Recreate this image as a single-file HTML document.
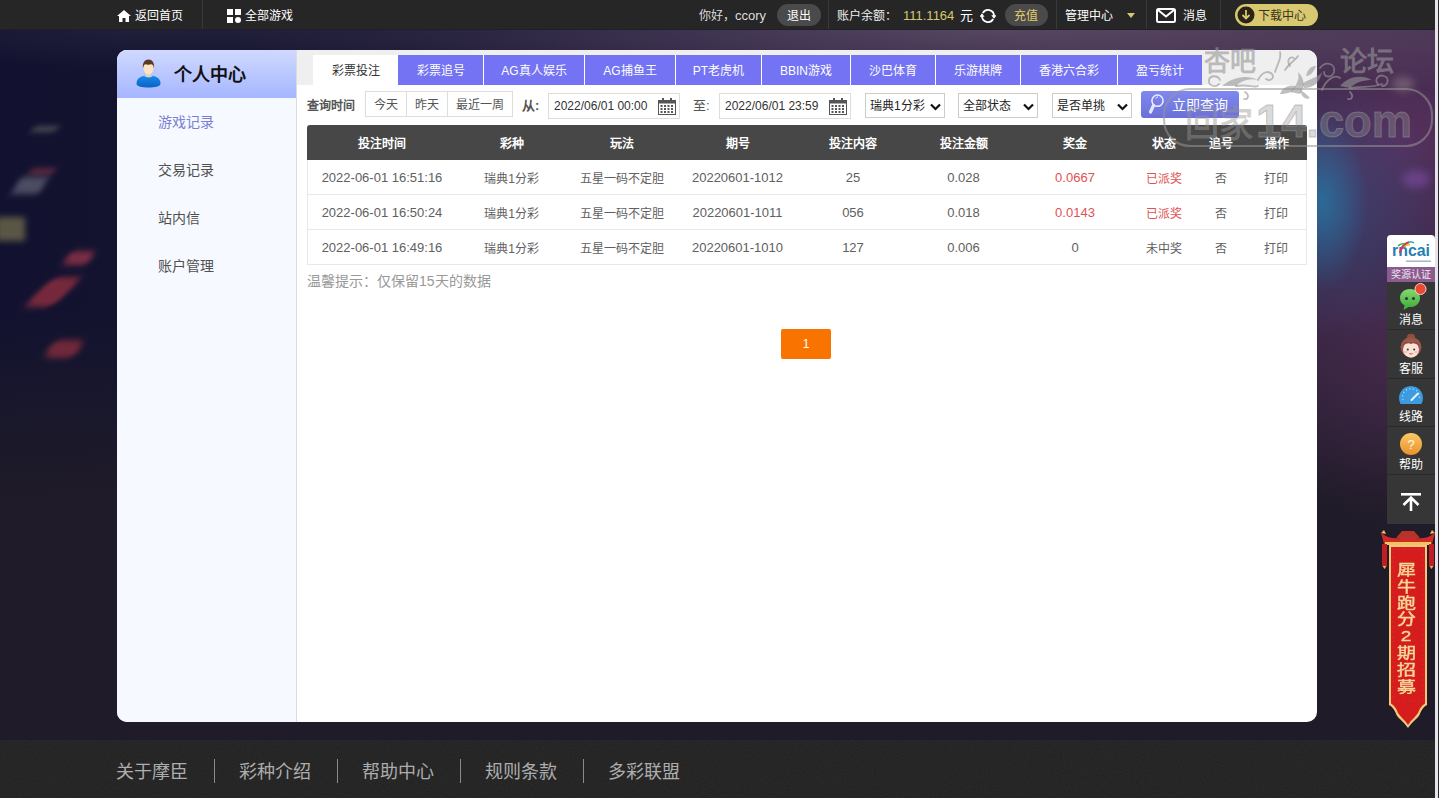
<!DOCTYPE html>
<html lang="zh-CN"><head><meta charset="utf-8">
<style>
*{margin:0;padding:0;box-sizing:border-box}
html,body{width:1439px;height:798px;overflow:hidden}
body{position:relative;font-family:"Liberation Sans",sans-serif;font-size:12px;color:#333;background:#16152e}
.abs{position:absolute}
#bg{left:0;top:29px;width:1439px;height:711px;overflow:hidden;
background:
radial-gradient(ellipse 45px 90px at 1322px 172px, rgba(35,135,180,.6), rgba(35,135,180,0) 100%),
radial-gradient(ellipse 110px 130px at 1335px 180px, rgba(50,90,150,.45), rgba(50,90,150,0) 100%),
radial-gradient(ellipse 170px 120px at 1400px 110px, rgba(120,55,115,.45), rgba(120,55,115,0) 100%),
radial-gradient(ellipse 160px 180px at 1410px 330px, rgba(95,45,90,.4), rgba(95,45,90,0) 100%),
radial-gradient(ellipse 800px 70px at 1000px 0px, rgba(125,105,130,.5), rgba(125,105,130,0) 100%),
radial-gradient(ellipse 300px 40px at 150px 0px, rgba(60,55,80,.35), rgba(60,55,80,0) 100%),
linear-gradient(180deg, rgba(31,27,40,0) 0px, rgba(31,27,40,0) 280px, rgba(31,27,40,1) 470px, rgba(31,27,40,1) 711px),
linear-gradient(90deg,#121230 0px,#14142f 250px,#221c3a 700px,#362644 1150px,#3c2a4a 1439px);}
.bk{position:absolute;filter:blur(3px);transform:skewX(-30deg)}
#topbar{left:0;top:0;width:1439px;height:30px;background:linear-gradient(180deg,#262626 0,#262626 29px,#201f2a 29px);color:#fff}
#topbar span{position:absolute;top:1px;line-height:30px;white-space:nowrap}
.vsep{position:absolute;top:0;width:1px;height:29px;background:#3a3a3a}
#card{left:117px;top:50px;width:1200px;height:672px;background:#fff;border-radius:10px;overflow:hidden}
#side{left:0;top:0;width:180px;height:672px;background:#f6f9ff;border-right:1px solid #d8dede}
#sidehead{left:0;top:0;width:179px;height:48px;background:linear-gradient(180deg,#cfd9ff,#a6b6ff)}
#sidehead b{position:absolute;left:57px;top:13px;font-size:18px;font-weight:900;line-height:24px;color:#111}
.menu{position:absolute;left:41px;font-size:14px;color:#505050;line-height:20px}
#tabbar{left:180px;top:0;width:1020px;height:35px;background:#efefef}
.tab{position:absolute;top:5px;height:30px;line-height:33px;overflow:hidden;text-align:center;font-size:12px;color:#fff;background:#7373f3;border-left:1px solid #fff}
.tab.on{background:#fff;color:#333;border-left:0}
.qbtn{position:absolute;top:41px;height:26px;line-height:27px;overflow:hidden;border:1px solid #ddd;text-align:center;font-size:12px;color:#555;background:#fff}
.inp{position:absolute;top:43px;height:26px;border:1px solid #ddd;background:#fff;font-size:12px;color:#333;line-height:24px;padding-left:5px}
.sel{position:absolute;top:43px;height:25px;border:1px solid #ccc;background:#fff;font-size:12px;color:#222;line-height:25px;overflow:hidden;padding-left:4px}
.lbl{position:absolute;top:43px;line-height:26px;font-size:13px;color:#555}
table{position:absolute;left:190px;top:75px;width:1000px;border-collapse:separate;border-spacing:0;table-layout:fixed}
th{background:#474747;color:#fff;height:35px;font-weight:bold;font-size:12px;text-align:center}
td{height:35px;text-align:center;font-size:12px;color:#606060;border-bottom:1px solid #e8e8e8}
td.n{font-size:13px}
tr td:first-child{border-left:1px solid #e8e8e8}
tr td:last-child{border-right:1px solid #e8e8e8}
.red{color:#e05252}
tr th:first-child{border-top-left-radius:3px}
tr th:last-child{border-top-right-radius:3px}
#foot{left:0;top:740px;width:1439px;height:58px;background:#1f1f1f;overflow:hidden}
#foot span{position:absolute;top:1px;line-height:62px;font-size:18px;color:#adadad}
#foot i{position:absolute;top:19px;width:1px;height:24px;background:#8a8a8a}
#float{left:1387px;top:235px;width:48px}
</style></head><body>
<div id="bg" class="abs">
  <div class="bk" style="left:33px;top:98px;width:24px;height:4px;background:rgba(120,125,110,.75)"></div>
  <div class="bk" style="left:30px;top:140px;width:24px;height:5px;background:rgba(160,60,75,.7)"></div>
  <div class="bk" style="left:16px;top:148px;width:28px;height:17px;background:rgba(95,95,115,.75)"></div>
  <div class="bk" style="left:-4px;top:188px;width:29px;height:24px;background:rgba(115,110,75,.75);transform:none"></div>
  <div class="bk" style="left:66px;top:222px;width:26px;height:14px;background:rgba(165,55,75,.7);border-radius:6px"></div>
  <div class="bk" style="left:38px;top:248px;width:30px;height:30px;background:rgba(160,50,65,.7);border-radius:8px;transform:skewX(-45deg)"></div>
  <div class="bk" style="left:48px;top:311px;width:32px;height:18px;background:rgba(160,50,65,.65);border-radius:8px"></div>
  <div class="bk" style="left:1392px;top:48px;width:22px;height:14px;background:rgba(200,200,180,.3);border-radius:50%;filter:blur(4px);transform:none"></div>
  <div class="bk" style="left:1402px;top:141px;width:28px;height:18px;background:rgba(150,90,200,.4);border-radius:50%;filter:blur(4px);transform:none"></div>
</div>

<div id="topbar" class="abs">
  <svg class="abs" style="left:117px;top:10px" width="14" height="12" viewBox="0 0 14 12"><path d="M7 0 L14 6 L12 6 L12 12 L8.5 12 L8.5 8 L5.5 8 L5.5 12 L2 12 L2 6 L0 6 Z" fill="#fff"/></svg>
  <span style="left:135px;font-size:12px">返回首页</span>
  <div class="vsep" style="left:202px"></div>
  <svg class="abs" style="left:227px;top:9px" width="14" height="14" viewBox="0 0 14 14"><rect x="0" y="0" width="6" height="6" fill="#fff"/><rect x="8" y="0" width="6" height="6" fill="#fff"/><rect x="0" y="8" width="6" height="6" fill="#fff"/><circle cx="11" cy="11" r="3" fill="#fff"/></svg>
  <span style="left:245px">全部游戏</span>

  <span style="left:699px;color:#ddd">你好，<b style="font-weight:normal;font-size:13px">ccory</b></span>
  <div class="abs" style="left:777px;top:4px;width:44px;height:22px;border-radius:11px;background:#4a4a4a"></div>
  <span style="left:787px">退出</span>
  <div class="vsep" style="left:828px"></div>
  <span style="left:837px;color:#eee">账户余额：</span>
  <span style="left:903px;color:#d6c870;font-size:13px">111.1164</span>
  <span style="left:960px;font-size:13px">元</span>
  <svg class="abs" style="left:980px;top:8px" width="16" height="16" viewBox="0 0 16 16"><path d="M2.8 5 A6 6 0 0 1 14 8" stroke="#fff" stroke-width="1.8" fill="none"/><path d="M13.2 11 A6 6 0 0 1 2 8" stroke="#fff" stroke-width="1.8" fill="none"/><path d="M11.3 7.2 L16.5 7.2 L14 10.8 Z" fill="#fff"/><path d="M-0.5 8.8 L4.5 8.8 L2 5.2 Z" fill="#fff"/></svg>
  <div class="abs" style="left:1005px;top:4px;width:43px;height:22px;border-radius:11px;background:#4a4a4a"></div>
  <span style="left:1014px;color:#e2cf6e">充值</span>
  <div class="vsep" style="left:1056px"></div>
  <span style="left:1065px">管理中心</span>
  <svg class="abs" style="left:1127px;top:13px" width="8" height="5" viewBox="0 0 8 5"><path d="M0 0 L8 0 L4 5 Z" fill="#d6c870"/></svg>
  <div class="vsep" style="left:1146px"></div>
  <svg class="abs" style="left:1156px;top:8px" width="20" height="15" viewBox="0 0 20 15"><rect x="1" y="1" width="18" height="13" rx="1.5" stroke="#fff" stroke-width="2" fill="none"/><path d="M2 2 L10 8.5 L18 2" stroke="#fff" stroke-width="2" fill="none"/></svg>
  <span style="left:1183px">消息</span>
  <div class="vsep" style="left:1220px"></div>
  <div class="abs" style="left:1235px;top:4px;width:83px;height:22px;border-radius:11px;background:#d8c870"></div>
  <svg class="abs" style="left:1237px;top:6px" width="18" height="18" viewBox="0 0 18 18"><circle cx="9" cy="9" r="8.5" fill="#2a2418"/><path d="M9 4 L9 12 M5.5 9 L9 12.5 L12.5 9" stroke="#d8c870" stroke-width="1.8" fill="none"/></svg>
  <span style="left:1258px;color:#3a3320">下载中心</span>
</div>

<div id="card" class="abs">
  <div id="side" class="abs">
    <div id="sidehead" class="abs">
      <svg class="abs" style="left:19px;top:9px" width="25" height="29" viewBox="0 0 25 29">
        <defs><linearGradient id="bd" x1="0" y1="0" x2="0" y2="1"><stop offset="0" stop-color="#1a8ae8"/><stop offset="1" stop-color="#0a62c8"/></linearGradient></defs>
        <path d="M0.5 24.5 C0.5 19 5.5 16.5 12.5 16.5 C19.5 16.5 24.5 19 24.5 24.5 C24.5 27.5 19 28.5 12.5 28.5 C6 28.5 0.5 27.5 0.5 24.5 Z" fill="url(#bd)"/>
        <path d="M8 16.8 C9.5 19 15.5 19 17 16.8 C15.5 16.2 9.5 16.2 8 16.8 Z" fill="#9fd6fa"/>
        <rect x="10" y="12" width="5" height="5.5" fill="#f6cfa6"/>
        <ellipse cx="12.5" cy="9" rx="5" ry="6.3" fill="#fde2c4"/>
        <path d="M7 9.5 C6.2 3.5 9 0.6 12.5 0.6 C16 0.6 18.8 3.5 18 9.5 C17.6 7 17 5.6 15.5 5.2 C13.5 5.8 11 5.8 9.2 5.2 C8 5.8 7.4 7.2 7 9.5 Z" fill="#5b3a26"/>
      </svg>
      <b>个人中心</b>
    </div>
    <div class="menu" style="top:62px;color:#7a7fd6">游戏记录</div>
    <div class="menu" style="top:110px">交易记录</div>
    <div class="menu" style="top:158px">站内信</div>
    <div class="menu" style="top:206px">账户管理</div>
  </div>
  <div id="tabbar" class="abs"></div>
  <div class="tab on" style="left:196px;width:85px">彩票投注</div>
  <div class="tab" style="left:281px;width:85px;border-left:0">彩票追号</div>
  <div class="tab" style="left:366px;width:101px">AG真人娱乐</div>
  <div class="tab" style="left:467px;width:91px">AG捕鱼王</div>
  <div class="tab" style="left:558px;width:86px">PT老虎机</div>
  <div class="tab" style="left:644px;width:89px">BBIN游戏</div>
  <div class="tab" style="left:733px;width:85px">沙巴体育</div>
  <div class="tab" style="left:818px;width:85px">乐游棋牌</div>
  <div class="tab" style="left:903px;width:97px">香港六合彩</div>
  <div class="tab" style="left:1000px;width:85px">盈亏统计</div>

  <div class="lbl" style="left:190px;top:43px;font-weight:bold;color:#555;font-size:12px">查询时间</div>
  <div class="qbtn" style="left:248px;width:42px">今天</div>
  <div class="qbtn" style="left:289px;width:42px">昨天</div>
  <div class="qbtn" style="left:330px;width:66px">最近一周</div>
  <div class="lbl" style="left:405px;font-weight:bold">从:</div>
  <div class="inp" style="left:431px;width:132px">2022/06/01 00:00</div>
  <div class="lbl" style="left:576px">至:</div>
  <div class="inp" style="left:602px;width:132px">2022/06/01 23:59</div>
  <div class="sel" style="left:748px;width:80px">瑞典1分彩</div>
  <div class="sel" style="left:841px;width:80px">全部状态</div>
  <div class="sel" style="left:935px;width:80px">是否单挑</div>
  <div class="abs" style="left:1024px;top:41px;width:98px;height:27px;border-radius:3px;background:linear-gradient(180deg,#8088f0,#6a70d8)"></div>
  <div class="abs" style="left:1055px;top:42px;line-height:27px;font-size:14px;color:#fff">立即查询</div>
<svg class="abs" style="left:541px;top:48px" width="18" height="17" viewBox="0 0 18 17"><rect x="0.5" y="2.5" width="17" height="14" fill="none" stroke="#555" stroke-width="1"/><rect x="0.5" y="2.5" width="17" height="3" fill="#555"/><rect x="4" y="0" width="2" height="4" fill="#555"/><rect x="12" y="0" width="2" height="4" fill="#555"/><g fill="#555"><rect x="2.5" y="7" width="2" height="2"/><rect x="6" y="7" width="2" height="2"/><rect x="9.5" y="7" width="2" height="2"/><rect x="13" y="7" width="2" height="2"/><rect x="2.5" y="10" width="2" height="2"/><rect x="6" y="10" width="2" height="2"/><rect x="9.5" y="10" width="2" height="2"/><rect x="13" y="10" width="2" height="2"/><rect x="2.5" y="13" width="2" height="2"/><rect x="6" y="13" width="2" height="2"/><rect x="9.5" y="13" width="2" height="2"/><rect x="13" y="13" width="2" height="2"/></g></svg><svg class="abs" style="left:712px;top:48px" width="18" height="17" viewBox="0 0 18 17"><rect x="0.5" y="2.5" width="17" height="14" fill="none" stroke="#555" stroke-width="1"/><rect x="0.5" y="2.5" width="17" height="3" fill="#555"/><rect x="4" y="0" width="2" height="4" fill="#555"/><rect x="12" y="0" width="2" height="4" fill="#555"/><g fill="#555"><rect x="2.5" y="7" width="2" height="2"/><rect x="6" y="7" width="2" height="2"/><rect x="9.5" y="7" width="2" height="2"/><rect x="13" y="7" width="2" height="2"/><rect x="2.5" y="10" width="2" height="2"/><rect x="6" y="10" width="2" height="2"/><rect x="9.5" y="10" width="2" height="2"/><rect x="13" y="10" width="2" height="2"/><rect x="2.5" y="13" width="2" height="2"/><rect x="6" y="13" width="2" height="2"/><rect x="9.5" y="13" width="2" height="2"/><rect x="13" y="13" width="2" height="2"/></g></svg><svg class="abs" style="left:813px;top:53px" width="11" height="8" viewBox="0 0 11 8"><path d="M1 1.5 L5.5 6 L10 1.5" stroke="#111" stroke-width="2.2" fill="none"/></svg><svg class="abs" style="left:906px;top:53px" width="11" height="8" viewBox="0 0 11 8"><path d="M1 1.5 L5.5 6 L10 1.5" stroke="#111" stroke-width="2.2" fill="none"/></svg><svg class="abs" style="left:1000px;top:53px" width="11" height="8" viewBox="0 0 11 8"><path d="M1 1.5 L5.5 6 L10 1.5" stroke="#111" stroke-width="2.2" fill="none"/></svg><svg class="abs" style="left:1024px;top:41px" width="30" height="27" viewBox="0 0 30 27"><circle cx="16.5" cy="9.7" r="5.6" fill="none" stroke="#f0f0ff" stroke-width="1.5"/><path d="M14.5 7.5 A2.5 2.5 0 0 1 17 6" stroke="#f0f0ff" stroke-width="1" fill="none"/><path d="M12.5 14.5 L9.5 21" stroke="#e6e6fa" stroke-width="3.2" stroke-linecap="round"/></svg>

  <table>
    <colgroup><col style="width:149px"><col style="width:111px"><col style="width:110px"><col style="width:121px"><col style="width:110px"><col style="width:111px"><col style="width:112px"><col style="width:65px"><col style="width:50px"><col style="width:61px"></colgroup>
    <tr><th>投注时间</th><th>彩种</th><th>玩法</th><th>期号</th><th>投注内容</th><th>投注金额</th><th>奖金</th><th>状态</th><th>追号</th><th>操作</th></tr>
    <tr><td class="n">2022-06-01 16:51:16</td><td>瑞典1分彩</td><td>五星一码不定胆</td><td class="n">20220601-1012</td><td class="n">25</td><td class="n">0.028</td><td class="red n">0.0667</td><td class="red">已派奖</td><td>否</td><td>打印</td></tr>
    <tr><td class="n">2022-06-01 16:50:24</td><td>瑞典1分彩</td><td>五星一码不定胆</td><td class="n">20220601-1011</td><td class="n">056</td><td class="n">0.018</td><td class="red n">0.0143</td><td class="red">已派奖</td><td>否</td><td>打印</td></tr>
    <tr><td class="n">2022-06-01 16:49:16</td><td>瑞典1分彩</td><td>五星一码不定胆</td><td class="n">20220601-1010</td><td class="n">127</td><td class="n">0.006</td><td class="n">0</td><td>未中奖</td><td>否</td><td>打印</td></tr>
  </table>
  <div class="abs" style="left:190px;top:221px;font-size:14px;color:#999;line-height:20px">温馨提示：仅保留15天的数据</div>
  <div class="abs" style="left:664px;top:279px;width:50px;height:30px;border-radius:2px;background:#f97300;color:#fff;text-align:center;line-height:30px;font-size:12px">1</div>
</div>


<svg class="abs" style="left:1150px;top:30px" width="289" height="125" viewBox="1150 30 289 125">
 <g fill="rgba(150,150,150,.62)" font-family="Liberation Sans" font-weight="bold">
  <text x="1204" y="71" font-size="27" textLength="52" lengthAdjust="spacingAndGlyphs">杏吧</text>
  <text x="1340" y="71" font-size="27" textLength="54" lengthAdjust="spacingAndGlyphs">论坛</text>
  <text x="1185" y="137" font-size="36" fill-opacity=".7" textLength="68" lengthAdjust="spacingAndGlyphs">回家</text>
  <text x="1256" y="137" font-size="46" fill-opacity=".55" stroke="rgba(150,150,150,.5)" stroke-width="1" textLength="156" lengthAdjust="spacingAndGlyphs">14.com</text>
 </g>
 <rect x="1164" y="89" width="268" height="57" rx="26" fill="none" stroke="rgba(150,150,150,.55)" stroke-width="2.2"/>
 <g fill="none" stroke="rgba(150,150,150,.62)" stroke-width="1.8" stroke-linecap="round">
  <path d="M1219 84 C1216 88 1208 86 1209 80 C1210 75 1218 75 1220 80"/>
  <path d="M1236 86 C1248 84 1254 88 1258 86"/>
  <path d="M1258 80 C1262 72 1268 70 1272 74 C1275 78 1270 82 1266 79"/>
  <path d="M1245 92 C1250 95 1248 100 1244 99"/>
  <path d="M1275 72 C1278 62 1282 58 1280 52"/>
  <path d="M1285 70 C1290 62 1296 60 1298 56"/>
  <path d="M1290 66 C1286 60 1290 56 1294 58"/>
  <path d="M1320 68 C1326 60 1336 64 1334 72 C1332 78 1324 78 1324 72"/>
  <path d="M1322 90 C1326 80 1334 74 1340 78"/>
  <path d="M1350 88 C1362 86 1372 88 1382 84"/>
  <path d="M1378 84 C1374 80 1378 74 1384 76 C1390 78 1388 86 1382 86"/>
  <path d="M1350 92 C1354 96 1352 100 1348 99"/>
 </g>
 <g fill="rgba(150,150,150,.6)">
  <path d="M1222 86 C1232 78 1245 74 1258 80 C1250 78 1242 80 1236 86 Z"/>
  <path d="M1290 92 C1296 86 1300 80 1298 72 C1304 78 1306 86 1300 94 Z"/>
  <path d="M1302 84 C1310 78 1318 78 1322 72 C1320 82 1314 88 1304 88 Z"/>
  <path d="M1296 86 C1288 84 1282 88 1280 94 C1288 94 1294 92 1296 86 Z"/>
  <path d="M1300 90 C1302 98 1306 100 1310 98 C1306 94 1304 92 1300 90 Z"/>
  <path d="M1306 76 C1308 68 1312 66 1316 66 C1314 72 1310 76 1306 76 Z"/>
  <path d="M1340 86 C1348 76 1362 74 1372 80 C1364 80 1356 82 1350 88 Z"/>
 </g>
</svg>
<div id="foot" class="abs">
  <svg class="abs" style="left:0;top:0" width="1439" height="58"><filter id="nz"><feTurbulence type="fractalNoise" baseFrequency="0.9" numOctaves="2" seed="3"/><feColorMatrix values="0 0 0 0 0.5  0 0 0 0 0.5  0 0 0 0 0.5  0 0 0 0.09 0"/></filter><rect width="1439" height="58" filter="url(#nz)"/></svg>
  <span style="left:116px">关于摩臣</span><i style="left:214px"></i>
  <span style="left:239px">彩种介绍</span><i style="left:337px"></i>
  <span style="left:362px">帮助中心</span><i style="left:460px"></i>
  <span style="left:485px">规则条款</span><i style="left:583px"></i>
  <span style="left:608px">多彩联盟</span>
</div>


<div class="abs" style="left:1387px;top:235px;width:48px;height:47px;border-radius:4px 4px 0 0;background:#fff;overflow:hidden">
  <div class="abs" style="left:0;top:32px;width:48px;height:15px;background:#8b5c8e;color:#f2e6f2;font-size:10px;line-height:15px;text-align:center">奖源认证</div>
  <svg class="abs" style="left:0;top:0" width="48" height="32" viewBox="0 0 48 32">
    <text x="5" y="21" font-family="Liberation Sans" font-weight="bold" font-size="17" fill="#2480b4" textLength="38" lengthAdjust="spacingAndGlyphs">rncai</text>
    <path d="M13 18 C14 12 17 9 22 7" stroke="#d8306a" stroke-width="2.2" fill="none"/>
    <path d="M11 11 C13 9 15 8.5 18 8.5" stroke="#48b048" stroke-width="1.6" fill="none"/>
    <path d="M17 12 C19 10 21 9.5 23 10" stroke="#f0b000" stroke-width="1.3" fill="none"/>
    <path d="M21 8 C23 6.5 25 6.5 27 8" stroke="#1aa0a0" stroke-width="1.3" fill="none"/>
    <rect x="19" y="25.5" width="25" height="1.4" fill="#9fb0c0"/>
  </svg>
</div>
<div class="abs" style="left:1387px;top:282px;width:48px;height:242px;background:#363636"></div>
<div class="abs" style="left:1387px;top:329px;width:48px;height:1px;background:#2a2a2a"></div>
<div class="abs" style="left:1387px;top:378px;width:48px;height:1px;background:#2a2a2a"></div>
<div class="abs" style="left:1387px;top:426px;width:48px;height:1px;background:#2a2a2a"></div>
<div class="abs" style="left:1387px;top:474px;width:48px;height:1px;background:#2a2a2a"></div>
<svg class="abs" style="left:1399px;top:286px;overflow:visible" width="30" height="26" viewBox="0 0 30 26">
  <defs><linearGradient id="gb" x1="0" y1="0" x2="0" y2="1"><stop offset="0" stop-color="#86d86e"/><stop offset="1" stop-color="#3aa83a"/></linearGradient></defs>
  <path d="M11 3 C5 3 1 7 1 12 C1 15.5 3 18 5.5 19.3 L4.5 24 L9.5 20.9 C10 21 10.5 21.1 11 21.1 C17 21.1 21 17 21 12 C21 7 17 3 11 3 Z" fill="url(#gb)"/>
  <circle cx="7.5" cy="12.5" r="1.5" fill="#1e3a2a"/><circle cx="14.5" cy="12.5" r="1.5" fill="#1e3a2a"/>
  <circle cx="21.5" cy="3" r="5.5" fill="#e84a32" stroke="#f3d0c8" stroke-width="1"/>
</svg>
<div class="abs" style="left:1387px;top:312px;width:48px;text-align:center;color:#fff;font-size:12px;line-height:16px">消息</div>
<svg class="abs" style="left:1399px;top:333px" width="24" height="27" viewBox="0 0 24 27">
  <ellipse cx="12" cy="4" rx="4" ry="3.2" fill="#8e4e3e"/>
  <ellipse cx="12" cy="14" rx="10.5" ry="10" fill="#9a5646"/>
  <ellipse cx="12" cy="16.5" rx="8" ry="8.2" fill="#fde0d6"/>
  <path d="M3.5 13 C5 6.5 19 6.5 20.5 13 C17 10.5 14 9.5 12 11 C9.5 9.5 6.5 10.5 3.5 13 Z" fill="#8a4a3a"/>
  <circle cx="8.8" cy="16.5" r="1" fill="#333"/><circle cx="15.2" cy="16.5" r="1" fill="#333"/>
  <ellipse cx="7" cy="19" rx="1.5" ry="1" fill="#f7b8b0"/><ellipse cx="17" cy="19" rx="1.5" ry="1" fill="#f7b8b0"/>
  <path d="M10.3 20.5 Q12 21.8 13.7 20.5" stroke="#d44" stroke-width="1" fill="none"/>
</svg>
<div class="abs" style="left:1387px;top:361px;width:48px;text-align:center;color:#fff;font-size:12px;line-height:16px">客服</div>
<svg class="abs" style="left:1398px;top:385px" width="26" height="20" viewBox="0 0 26 20">
  <path d="M2.6 19 A12 12 0 1 1 23.4 19 Z" fill="#3d9be0"/>
  <path d="M5 15 A8.5 8.5 0 1 1 21 15" stroke="#a8dcff" stroke-width="1.2" fill="none" stroke-dasharray="1.2 2.4"/>
  <path d="M13.5 15 L20 8.5" stroke="#eaf6ff" stroke-width="1.8" stroke-linecap="round"/>
</svg>
<div class="abs" style="left:1387px;top:409px;width:48px;text-align:center;color:#fff;font-size:12px;line-height:16px">线路</div>
<svg class="abs" style="left:1399px;top:432px" width="24" height="24" viewBox="0 0 24 24">
  <defs><linearGradient id="gh" x1="0" y1="0" x2="0" y2="1"><stop offset="0" stop-color="#fbc866"/><stop offset="1" stop-color="#e8922c"/></linearGradient></defs>
  <circle cx="12" cy="12" r="11" fill="url(#gh)"/>
  <text x="12" y="16.5" text-anchor="middle" font-family="Liberation Sans" font-size="13" fill="#fff8e8">?</text>
</svg>
<div class="abs" style="left:1387px;top:457px;width:48px;text-align:center;color:#fff;font-size:12px;line-height:16px">帮助</div>
<svg class="abs" style="left:1401px;top:493px" width="20" height="18" viewBox="0 0 20 18">
  <rect x="0" y="0" width="20" height="2.6" fill="#fff"/>
  <path d="M10 4 L10 18 M2.5 12 L10 4.5 L17.5 12" stroke="#fff" stroke-width="2.6" fill="none"/>
</svg>

<svg class="abs" style="left:1380px;top:529px" width="56" height="200" viewBox="0 0 56 200">
  <path d="M1 4 C8 9 14 10 20 9 L36 9 C42 10 48 9 55 4 L52 15 L4 15 Z" fill="#cf2a26"/>
  <path d="M16 9 L22 2 L34 2 L40 9 Z" fill="#b8342a"/>
  <path d="M1 4 L4 1 L6 5 Z M55 4 L52 1 L50 5 Z" fill="#f0c060"/>
  <rect x="5" y="13" width="46" height="3" fill="#f2c365"/>
  <rect x="2" y="15" width="5" height="22" fill="#c21d20"/>
  <rect x="49" y="15" width="5" height="22" fill="#c21d20"/>
  <path d="M2.5 37 L4.5 40 L6.5 37 Z M49.5 37 L51.5 40 L53.5 37 Z" fill="#e8b050"/>
  <path d="M9 16 L47 16 L47 176 C43 178 41 182 39.5 186 C37 190 32 193 28 199 C24 193 19 190 16.5 186 C15 182 13 178 9 176 Z" fill="#f3c77c"/>
  <path d="M11 18 L45 18 L45 174.5 C41.5 176.5 39.5 180 38 184 C35.5 188 31 191 28 196 C25 191 20.5 188 18 184 C16.5 180 14.5 176.5 11 174.5 Z" fill="#d51d1d"/>
  <path d="M13 20 L43 20 L43 172 L13 172 Z" fill="none" stroke="#e84a3a" stroke-width=".6" stroke-dasharray="2 3" opacity=".6"/>
</svg>
<div class="abs" style="left:1382px;top:562px;width:48px;text-align:center;color:#f8d898;font-size:19px;font-weight:normal;-webkit-text-stroke:0.5px #f8d898;line-height:20.8px;transform:scaleY(.8);transform-origin:50% 0">犀<br>牛<br>跑<br>分<br>2<br>期<br>招<br>募</div>
<div class="abs" style="left:1435px;top:0;width:3px;height:798px;background:#e4e4ea"></div><div class="abs" style="left:1438px;top:0;width:1px;height:798px;background:#2a2a30"></div>
</body></html>
